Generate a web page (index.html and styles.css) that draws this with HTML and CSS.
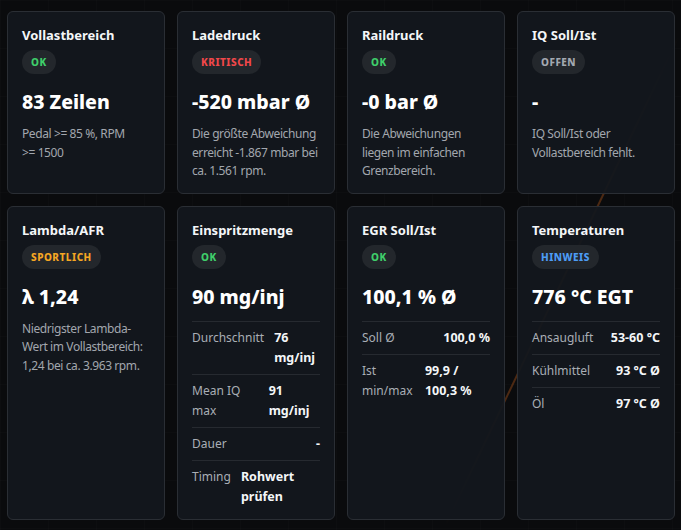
FILE: index.html
```html
<!DOCTYPE html>
<html lang="de">
<head>
	<meta charset="UTF-8">
	<title>Auswertung</title>
	<link rel="stylesheet" href="styles.css">
</head>
<body>
	<div class="board">
		<div class="card">
			<div class="card-title">Vollastbereich</div>
			<span class="badge ok">OK</span>
			<div class="card-value">83 Zeilen</div>
			<p class="card-text">Pedal &gt;= 85 %, RPM &gt;=&nbsp;1500</p>
		</div>
		<div class="card">
			<div class="card-title">Ladedruck</div>
			<span class="badge bad">KRITISCH</span>
			<div class="card-value">-520 mbar Ø</div>
			<p class="card-text">Die größte Abweichung erreicht -1.867 mbar bei ca. 1.561 rpm.</p>
		</div>
		<div class="card">
			<div class="card-title">Raildruck</div>
			<span class="badge ok">OK</span>
			<div class="card-value">-0 bar Ø</div>
			<p class="card-text">Die Abweichungen liegen im einfachen Grenzbereich.</p>
		</div>
		<div class="card">
			<div class="card-title">IQ Soll/Ist</div>
			<span class="badge open">OFFEN</span>
			<div class="card-value">-</div>
			<p class="card-text">IQ Soll/Ist oder Vollastbereich fehlt.</p>
		</div>

		<div class="card">
			<div class="card-title">Lambda/AFR</div>
			<span class="badge sport">SPORTLICH</span>
			<div class="card-value">λ 1,24</div>
			<p class="card-text">Niedrigster Lambda-Wert im Vollastbereich: 1,24 bei ca. 3.963 rpm.</p>
		</div>
		<div class="card">
			<div class="card-title">Einspritzmenge</div>
			<span class="badge ok">OK</span>
			<div class="card-value">90 mg/inj</div>
			<div class="rows">
				<div class="row"><span class="row-label">Durchschnitt</span><span class="row-val">76 mg/inj</span></div>
				<div class="row"><span class="row-label">Mean IQ max</span><span class="row-val">91 mg/inj</span></div>
				<div class="row"><span class="row-label">Dauer</span><span class="row-val">-</span></div>
				<div class="row"><span class="row-label">Timing</span><span class="row-val">Rohwert prüfen</span></div>
			</div>
		</div>
		<div class="card">
			<div class="card-title">EGR Soll/Ist</div>
			<span class="badge ok">OK</span>
			<div class="card-value">100,1 % Ø</div>
			<div class="rows">
				<div class="row"><span class="row-label">Soll Ø</span><span class="row-val">100,0 %</span></div>
				<div class="row"><span class="row-label">Ist min/max</span><span class="row-val">99,9 / 100,3 %</span></div>
			</div>
		</div>
		<div class="card">
			<div class="card-title">Temperaturen</div>
			<span class="badge info">HINWEIS</span>
			<div class="card-value">776 °C EGT</div>
			<div class="rows">
				<div class="row"><span class="row-label">Ansaugluft</span><span class="row-val">53-60 °C</span></div>
				<div class="row"><span class="row-label">Kühlmittel</span><span class="row-val">93 °C Ø</span></div>
				<div class="row"><span class="row-label">Öl</span><span class="row-val">97 °C Ø</span></div>
			</div>
		</div>
	</div>
</body>
</html>
```

FILE: styles.css
```css
html, body {
	margin: 0;
	height: 100%;
}
body {
	background-color: #0a0b0d;
	background-image:
		linear-gradient(rgba(255,255,255,0.012) 1px, transparent 1px),
		linear-gradient(90deg, rgba(255,255,255,0.012) 1px, transparent 1px);
	background-size: 48px 48px;
	font-family: "Noto Sans", "Open Sans", sans-serif;
	color: #f2f4f6;
	overflow: hidden;
	position: relative;
}
/* schwacher orangefarbener Strich im Hintergrund */
body::before {
	content: "";
	position: absolute;
	left: 561px;
	top: 11px;
	width: 2px;
	height: 540px;
	background: linear-gradient(transparent, rgba(230,110,30,0.3) 30%, rgba(230,110,30,0.3) 75%, transparent);
	transform: rotate(25.5deg);
	z-index: 0;
}
.board {
	position: relative;
	z-index: 1;
	display: grid;
	grid-template-columns: repeat(4, 1fr);
	gap: 12px;
	padding: 11px 6px 0 7px;
}
.card {
	display: flex;
	flex-direction: column;
	align-items: flex-start;
	background: rgba(19,23,29,0.95);
	border: 1px solid #2a2e34;
	border-radius: 6px;
	padding: 14px 14px 12px;
	min-width: 0;
}
.card-title {
	font-size: 13px;
	font-weight: 700;
	line-height: 18px;
	color: #f4f6f8;
}
.badge {
	margin-top: 6px;
	background: #23272c;
	border-radius: 12px;
	padding: 0 9px;
	height: 24px;
	line-height: 24px;
	font-size: 10px;
	font-weight: 800;
	letter-spacing: 0.5px;
}
.ok { color: #3fce6a; }
.bad { color: #f1474a; }
.open { color: #a3a9b1; }
.sport { color: #f5a623; }
.info { color: #4d9cf5; }
.card-value {
	margin-top: 16px;
	font-size: 19.5px;
	font-weight: 800;
	line-height: 24px;
	color: #ffffff;
}
.card-text {
	margin: 11px 0 0;
	font-size: 12px;
	letter-spacing: -0.4px;
	line-height: 18.6px;
	color: #a2a7ae;
}
.rows {
	align-self: stretch;
	margin-top: 12px;
}
.row {
	display: flex;
	justify-content: space-between;
	gap: 10px;
	border-top: 1px solid #262a30;
	padding: 6px 0;
	line-height: 20px;
}
.row:last-child {
	padding-bottom: 0;
}
.row-label {
	font-size: 12px;
	color: #a9aeb5;
}
.row-val {
	font-size: 12.5px;
	font-weight: 700;
	color: #f4f6f8;
}
```
